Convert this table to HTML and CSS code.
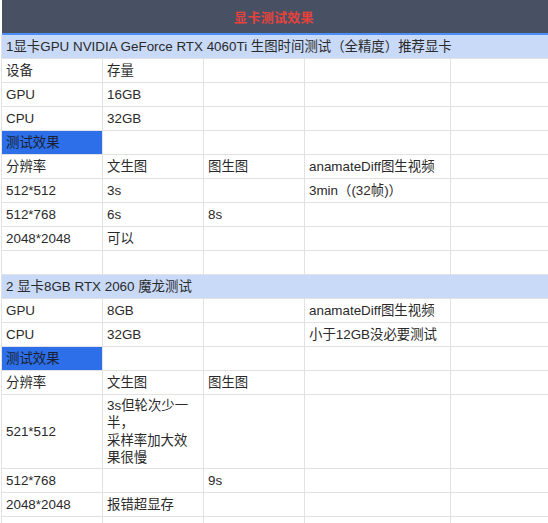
FILE: index.html
```html
<!DOCTYPE html>
<html>
<head>
<meta charset="utf-8">
<link rel="stylesheet" href="styles.css">
</head>
<body>
<div class="page">
  <div class="title-bar"><span class="title">显卡测试效果</span></div>
  <div class="accent"></div>
  <table class="sheet">
    <colgroup>
      <col class="c1"><col class="c2"><col class="c3"><col class="c4"><col class="c5">
    </colgroup>
    <tr class="section first"><td colspan="5">1显卡GPU NVIDIA GeForce RTX 4060Ti 生图时间测试（全精度）推荐显卡</td></tr>
    <tr><td>设备</td><td>存量</td><td></td><td></td><td></td></tr>
    <tr><td>GPU</td><td>16GB</td><td></td><td></td><td></td></tr>
    <tr><td>CPU</td><td>32GB</td><td></td><td></td><td></td></tr>
    <tr><td class="tag">测试效果</td><td></td><td></td><td></td><td></td></tr>
    <tr><td>分辨率</td><td>文生图</td><td>图生图</td><td>anamateDiff图生视频</td><td></td></tr>
    <tr><td>512*512</td><td>3s</td><td></td><td>3min（(32帧)）</td><td></td></tr>
    <tr><td>512*768</td><td>6s</td><td>8s</td><td></td><td></td></tr>
    <tr><td>2048*2048</td><td>可以</td><td></td><td></td><td></td></tr>
    <tr><td></td><td></td><td></td><td></td><td></td></tr>
    <tr class="section"><td colspan="5">2 显卡8GB RTX 2060 魔龙测试</td></tr>
    <tr><td>GPU</td><td>8GB</td><td></td><td>anamateDiff图生视频</td><td></td></tr>
    <tr><td>CPU</td><td>32GB</td><td></td><td>小于12GB没必要测试</td><td></td></tr>
    <tr><td class="tag">测试效果</td><td></td><td></td><td></td><td></td></tr>
    <tr><td>分辨率</td><td>文生图</td><td>图生图</td><td></td><td></td></tr>
    <tr class="tall"><td>521*512</td><td class="wrap">3s但轮次少一<br>半，<br>采样率加大效<br>果很慢</td><td></td><td></td><td></td></tr>
    <tr><td>512*768</td><td></td><td>9s</td><td></td><td></td></tr>
    <tr><td>2048*2048</td><td>报错超显存</td><td></td><td></td><td></td></tr>
    <tr><td></td><td></td><td></td><td></td><td></td></tr>
  </table>
</div>
</body>
</html>
```

FILE: styles.css
```css
html, body {
  margin: 0;
  padding: 0;
  background: #ffffff;
  overflow: hidden;
}

.page {
  width: 548px;
  height: 523px;
  overflow: hidden;
  font-family: "Liberation Sans", "Noto Sans CJK SC", sans-serif;
  font-size: 13.4px;
  color: #2a2a2a;
}

.title-bar {
  margin-left: 2px;
  height: 33px;
  background: #475163;
  display: flex;
  align-items: center;
  justify-content: center;
}

.title {
  color: #e8413c;
  font-size: 13px;
  font-weight: bold;
  letter-spacing: 0.3px;
  padding-right: 2px;
}

.accent {
  margin-left: 2px;
  height: 2px;
  background: #4a8ff5;
}

.sheet {
  margin-left: 1px;
  border-collapse: collapse;
  table-layout: fixed;
  width: 600px;
}

.c1 { width: 101px; }
.c2 { width: 101px; }
.c3 { width: 101px; }
.c4 { width: 146px; }
.c5 { width: 151px; }

.sheet td {
  border: 1px solid #e2e2e4;
  height: 24px;
  padding: 0 4px;
  box-sizing: border-box;
  white-space: nowrap;
  line-height: 15px;
  vertical-align: middle;
}

.sheet tr.section td {
  background: #c9daf8;
}

.sheet tr.first td {
  border-top: none;
  height: 23px;
}

.sheet td.tag {
  background: #2d6fe8;
  color: #1a1f33;
}

.sheet tr.tall td {
  height: 74px;
}

.sheet td.wrap {
  line-height: 17.5px;
  padding-top: 1px;
}
```
